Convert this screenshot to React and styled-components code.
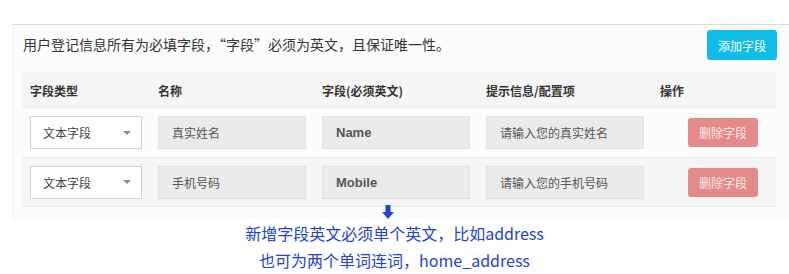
import React from "react";
import styled, { createGlobalStyle } from "styled-components";

const GlobalStyle = createGlobalStyle`
  body {
    margin: 0;
    background: #fff;
    font-family: "Noto Sans CJK SC", "Noto Sans", sans-serif;
    color: #333;
  }
`;

const Page = styled.div`
  position: relative;
  width: 789px;
  height: 274px;
  padding-top: 24px;
  box-sizing: border-box;
`;

const Panel = styled.div`
  margin-left: 12px;
  border-top: 1px solid #d9dae3;
  border-left: 1px solid #f0f0f0;
  background: #fcfcfc;
  padding: 5px 12px 13px 0;
`;

const TopBar = styled.div`
  display: flex;
  align-items: center;
  justify-content: space-between;
  padding-left: 10px;
  height: 30px;
`;

const Intro = styled.div`
  font-size: 14px;
  color: #333;
  line-height: 20px;
  margin-top: -2px;
`;

const Button = styled.button`
  width: 70px;
  height: ${(p) => p.$h || 30}px;
  border: none;
  border-radius: 3px;
  background: ${(p) => p.$bg};
  color: ${(p) => p.$color || "#fff"};
  font-family: "Noto Sans CJK SC", sans-serif;
  font-size: 12px;
  padding: 0;
  cursor: pointer;
`;

const Table = styled.div`
  margin: 12px 0 0 9px;
  width: 754px;
`;

const Row = styled.div`
  display: grid;
  grid-template-columns: 128px 164px 164px 174px 1fr;
  align-items: center;
  background: ${(p) => (p.$striped ? "#f5f5f5" : "#fcfcfc")};
  border-top: 1px solid ${(p) => (p.$head ? "transparent" : "#eeeeee")};
  border-bottom: ${(p) => (p.$last ? "1px solid #eeeeee" : "none")};
  height: ${(p) => (p.$head ? 35 : 50)}px;
  box-sizing: border-box;
`;

const HeadCell = styled.div`
  padding-left: 8px;
  font-size: 12px;
  font-weight: bold;
  color: #333;
`;

const Cell = styled.div`
  padding: 0 8px;
  padding-left: ${(p) => p.$pl || 8}px;
  display: flex;
  align-items: center;
`;

const SelectBox = styled.div`
  width: 100%;
  height: 33px;
  box-sizing: border-box;
  border: 1px solid #cfd3dc;
  background: #fff;
  display: flex;
  align-items: center;
  justify-content: space-between;
  padding: 0 10px 0 12px;
  font-size: 12px;
  color: #444;
`;

const Caret = styled.span`
  width: 0;
  height: 0;
  border-left: 4px solid transparent;
  border-right: 4px solid transparent;
  border-top: 4px solid #888;
`;

const Input = styled.div`
  width: 100%;
  height: 33px;
  box-sizing: border-box;
  border: 1px solid #e2e2e2;
  background: #ebebeb;
  display: flex;
  align-items: center;
  padding-left: 13px;
  font-size: ${(p) => (p.$bold ? 13 : 12)}px;
  font-weight: ${(p) => (p.$bold ? "bold" : "normal")};
  font-family: ${(p) =>
    p.$bold ? '"Liberation Sans", sans-serif' : '"Noto Sans CJK SC", sans-serif'};
  color: #555;
`;

const Note = styled.div`
  text-align: center;
  color: #2341d8;
  font-size: 16px;
  line-height: 27px;
  margin-left: 0px;
`;

const Arrow = styled.svg`
  position: absolute;
  left: 381px;
  top: 205px;
`;

const rows = [
  { name: "真实姓名", field: "Name", hint: "请输入您的真实姓名" },
  { name: "手机号码", field: "Mobile", hint: "请输入您的手机号码" },
];

export default function App() {
  return (
    <Page>
      <GlobalStyle />
      <Panel>
        <TopBar>
          <Intro>用户登记信息所有为必填字段，“字段”必须为英文，且保证唯一性。</Intro>
          <Button $bg="#10bde9">添加字段</Button>
        </TopBar>
        <Table>
          <Row $head $striped>
            <HeadCell>字段类型</HeadCell>
            <HeadCell>名称</HeadCell>
            <HeadCell>字段(必须英文)</HeadCell>
            <HeadCell>提示信息/配置项</HeadCell>
            <HeadCell>操作</HeadCell>
          </Row>
          {rows.map((r, i) => (
            <Row key={r.field} $striped={i % 2 === 1} $last={i === rows.length - 1}>
              <Cell>
                <SelectBox>
                  文本字段
                  <Caret />
                </SelectBox>
              </Cell>
              <Cell>
                <Input>{r.name}</Input>
              </Cell>
              <Cell>
                <Input $bold>{r.field}</Input>
              </Cell>
              <Cell>
                <Input>{r.hint}</Input>
              </Cell>
              <Cell $pl={36}>
                <Button $bg="#e48a88" $h={29} $color="#fbeaea">
                  删除字段
                </Button>
              </Cell>
            </Row>
          ))}
        </Table>
      </Panel>
      <Note>
        新增字段英文必须单个英文，比如address
        <br />
        也可为两个单词连词，home_address
      </Note>
      <Arrow width="14" height="14" viewBox="0 0 14 14">
        <path d="M4.5 0 H9.5 V7 H13 L7 14 L1 7 H4.5 Z" fill="#1f44d6" />
      </Arrow>
    </Page>
  );
}
